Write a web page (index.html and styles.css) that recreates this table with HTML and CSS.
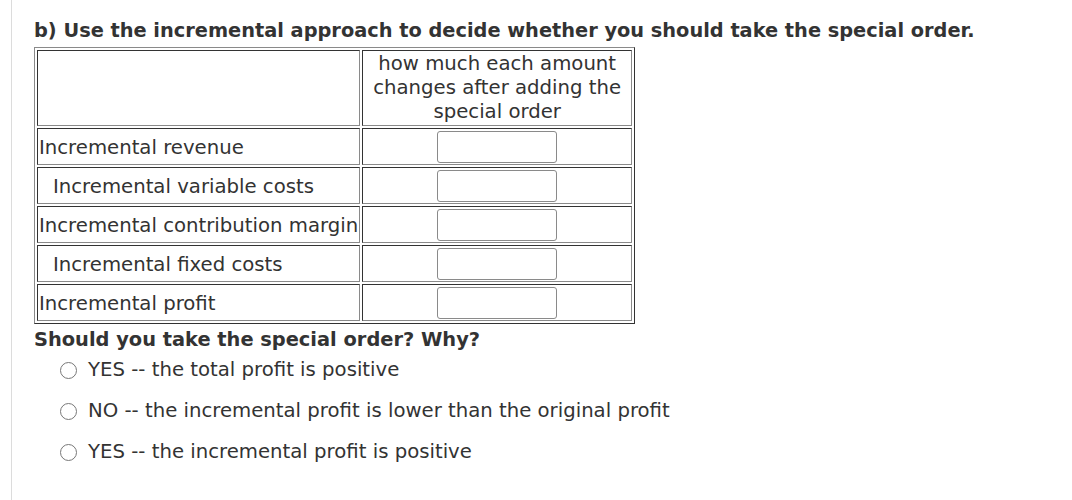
FILE: index.html
```html
<!DOCTYPE html>
<html>
<head>
<meta charset="utf-8">
<link rel="stylesheet" href="styles.css">
</head>
<body>
<div class="page">
  <h2 class="title">b) Use the incremental approach to decide whether you should take the special order.</h2>
  <table class="grid">
    <tr>
      <td class="label"></td>
      <td class="head">how much each amount<br>changes after adding the<br>special order</td>
    </tr>
    <tr>
      <td class="label">Incremental revenue</td>
      <td class="val"><input class="box" type="text"></td>
    </tr>
    <tr>
      <td class="label indent">Incremental variable costs</td>
      <td class="val"><input class="box" type="text"></td>
    </tr>
    <tr>
      <td class="label">Incremental contribution margin</td>
      <td class="val"><input class="box" type="text"></td>
    </tr>
    <tr>
      <td class="label indent">Incremental fixed costs</td>
      <td class="val"><input class="box" type="text"></td>
    </tr>
    <tr>
      <td class="label">Incremental profit</td>
      <td class="val"><input class="box" type="text"></td>
    </tr>
  </table>
  <p class="question">Should you take the special order? Why?</p>
  <div class="options">
    <label class="opt"><span class="radio"></span>YES -- the total profit is positive</label>
    <label class="opt"><span class="radio"></span>NO -- the incremental profit is lower than the original profit</label>
    <label class="opt"><span class="radio"></span>YES -- the incremental profit is positive</label>
  </div>
</div>
</body>
</html>
```

FILE: styles.css
```css
html, body {
  margin: 0;
  padding: 0;
  background: #fff;
}
body {
  font-family: "DejaVu Sans", Verdana, sans-serif;
  color: #333;
  font-size: 19.7px;
}
.page {
  margin-left: 11px;
  border-left: 1px solid #dcdcdc;
  padding: 19px 0 0 22px;
  min-height: 481px;
}
.title {
  margin: 0 0 4px 0;
  font-size: 19.35px;
  font-weight: bold;
  line-height: 24px;
  color: #333;
}
.grid {
  border-collapse: separate;
  border-spacing: 2px;
  border: 1px solid;
  border-color: #8a8a8a #333 #333 #8a8a8a;
  font-size: 19.7px;
}
.grid td {
  border: 1px solid;
  border-color: #333 #8a8a8a #8a8a8a #333;
  padding: 1px;
  line-height: 24px;
}
.grid td.label {
  height: 33px;
  padding: 2px 1px 0 1px;
  white-space: nowrap;
  vertical-align: middle;
}
.grid td.indent {
  padding-left: 15px;
}
.head {
  width: 266px;
  text-align: center;
}
.val {
  text-align: center;
  vertical-align: middle;
}
.box {
  display: block;
  margin: 0 auto;
  width: 120px;
  height: 32px;
  box-sizing: border-box;
  border: 1px solid #8a8a8a;
  border-radius: 3px;
  background: #fff;
  padding: 0;
}
.question {
  margin: 4px 0 0 0;
  font-size: 19.4px;
  font-weight: bold;
  line-height: 24px;
}
.options {
  display: flex;
  flex-direction: column;
  gap: 17px;
  padding-left: 26px;
  margin-top: 6px;
}
.opt {
  display: flex;
  align-items: center;
  gap: 11px;
  line-height: 24px;
}
.radio {
  width: 15px;
  height: 15px;
  border: 1px solid #777;
  border-radius: 50%;
  box-sizing: content-box;
}
```
